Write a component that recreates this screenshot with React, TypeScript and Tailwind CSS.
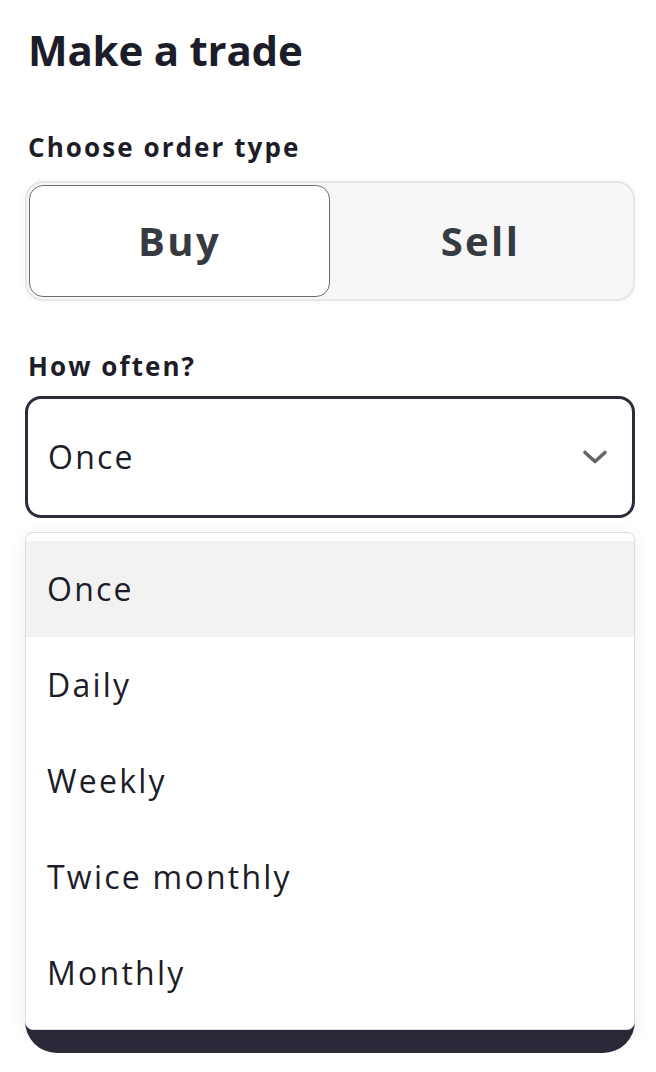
import * as React from "react";

const OPTIONS = ["Once", "Daily", "Weekly", "Twice monthly", "Monthly"] as const;

function Chevron() {
  return (
    <svg width="26" height="16" viewBox="0 0 26 16" fill="none" aria-hidden>
      <path
        d="M3 3.5 L13 12.5 L23 3.5"
        stroke="#666669"
        strokeWidth="3.6"
        strokeLinecap="round"
        strokeLinejoin="round"
      />
    </svg>
  );
}

export default function App() {
  const [side, setSide] = React.useState<"buy" | "sell">("buy");
  const [freq, setFreq] = React.useState<(typeof OPTIONS)[number]>("Once");

  return (
    <div
      className="h-[1072px] w-full overflow-hidden bg-white pl-[25px] pr-[21px] pt-[26px] text-[#1d1d29]"
      style={{ fontFamily: "'Open Sans', Lato, sans-serif" }}
    >
      <h1 className="pl-[3px] text-[42px] font-bold leading-[48px] tracking-[-0.005em]">Make a trade</h1>

      <p className="mt-[58px] pl-[3px] text-[26px] font-bold leading-[30px] tracking-[0.08em]">
        Choose order type
      </p>

      <div className="mt-[19px] flex h-[120px] rounded-[18px] border-2 border-[#e6e6e9] bg-[#f7f7f8] p-[2px] shadow-[0_0_10px_rgba(0,0,0,0.04)]">
        {(["buy", "sell"] as const).map((s) => (
          <button
            key={s}
            type="button"
            onClick={() => setSide(s)}
            className={`flex-1 rounded-[14px] text-[40px] font-bold tracking-[0.06em] text-[#363a41] ${
              side === s ? "border-[1.5px] border-[#6c6c74] bg-white" : "border-[1.5px] border-transparent"
            }`}
          >
            {s === "buy" ? "Buy" : "Sell"}
          </button>
        ))}
      </div>

      <p className="mt-[50px] pl-[3px] text-[26px] font-bold leading-[30px] tracking-[0.08em]">How often?</p>

      <div className="relative mt-[15px]">
        <button
          type="button"
          className="flex h-[122px] w-full items-center justify-between rounded-[16px] border-[3px] border-[#2b2b3a] bg-white pl-[20px] pr-[24px] text-left text-[32px] tracking-[0.07em]"
        >
          <span>{freq}</span>
          <Chevron />
        </button>

        <div className="mt-[471px] h-[64px] rounded-full bg-[#2a2a3a]" />

        <ul className="absolute left-0 right-0 top-[136px] rounded-[8px] border border-[#dcdcde] bg-white py-[8px] shadow-[0_4px_18px_rgba(0,0,0,0.08)]">
          {OPTIONS.map((o) => (
            <li key={o}>
              <button
                type="button"
                onClick={() => setFreq(o)}
                className={`flex h-[96px] w-full items-center px-[21px] text-left text-[32px] tracking-[0.07em] ${
                  o === "Once" ? "bg-[#f2f2f2]" : "bg-white"
                }`}
              >
                {o}
              </button>
            </li>
          ))}
        </ul>
      </div>
    </div>
  );
}
